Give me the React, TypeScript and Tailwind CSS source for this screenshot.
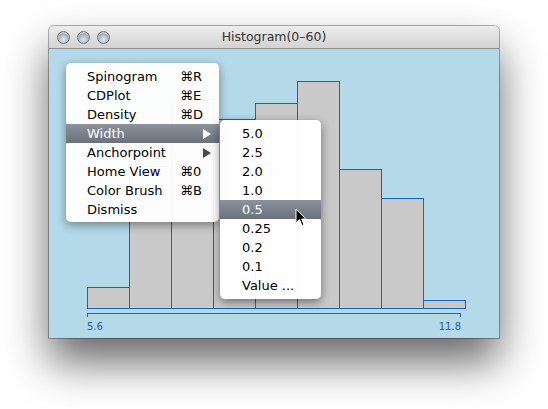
import React from 'react';

const bars = [
  { x: 38, top: 238 },
  { x: 80, top: 117 },
  { x: 122, top: 50 },
  { x: 164, top: 70 },
  { x: 206, top: 54 },
  { x: 248, top: 32 },
  { x: 290, top: 120 },
  { x: 332, top: 149 },
  { x: 374, top: 251 },
];

const mainItems = [
  { label: 'Spinogram', key: '⌘R' },
  { label: 'CDPlot', key: '⌘E' },
  { label: 'Density', key: '⌘D' },
  { label: 'Width', sub: true, active: true },
  { label: 'Anchorpoint', sub: true },
  { label: 'Home View', key: '⌘0' },
  { label: 'Color Brush', key: '⌘B' },
  { label: 'Dismiss' },
];

const widths = ['5.0', '2.5', '2.0', '1.0', '0.5', '0.25', '0.2', '0.1', 'Value ...'];

function Light() {
  return (
    <div className="w-[13px] h-[13px] rounded-full border border-[#6d7782] bg-[radial-gradient(circle_at_50%_70%,#e3e8ec_0%,#a9b2bb_55%,#7d8893_100%)] shadow-[inset_0_1px_1px_rgba(255,255,255,0.7)]" />
  );
}

function Arrow({ color }: { color: string }) {
  return (
    <svg width="8" height="10" viewBox="0 0 8 10">
      <path d="M0 0 L8 5 L0 10 Z" fill={color} />
    </svg>
  );
}

export default function App() {
  return (
    <div className="w-[548px] h-[409px] bg-white pt-[26px] pl-[49px] font-['DejaVu_Sans',sans-serif]">
      <div className="relative w-[450px] h-[312px] flex flex-col rounded-t-[5px] shadow-[0_24px_44px_rgba(0,0,0,0.6),0_0_0_1px_rgba(0,0,0,0.3)]">
        {/* title bar */}
        <div className="relative h-[23px] flex items-center rounded-t-[5px] bg-gradient-to-b from-[#ededed] to-[#d3d3d3] border-b border-[#8e8e8e]">
          <div className="flex gap-[7px] pl-[8px] pt-[1px]">
            <Light />
            <Light />
            <Light />
          </div>
          <div className="absolute inset-x-0 text-center text-[12.5px] text-[#333] pt-[1px]">Histogram(0–60)</div>
        </div>

        {/* plot area */}
        <div className="flex-1 bg-[#b4d9e8]">
          <svg width="450" height="289" viewBox="0 0 450 289" shapeRendering="crispEdges">
            {bars.map((b) => (
              <rect
                key={b.x}
                x={b.x + 0.5}
                y={b.top + 0.5}
                width={42}
                height={259 - b.top}
                fill="#c9c9c9"
                stroke="#1268bb"
                strokeWidth="1"
              />
            ))}
            <path d="M38.5 268 L38.5 264.5 L411.5 264.5 L411.5 268" fill="none" stroke="#1268bb" strokeWidth="1" />
            <text x="38" y="281" fontSize="10" fill="#2560a8" fontFamily="DejaVu Sans" shapeRendering="auto">5.6</text>
            <text x="412" y="281" fontSize="10" fill="#2560a8" fontFamily="DejaVu Sans" textAnchor="end" shapeRendering="auto">11.8</text>
          </svg>
        </div>

        {/* context menu */}
        <div className="absolute left-[17px] top-[37px] w-[153px] pt-[4px] pb-[3px] rounded-[5px] bg-white/[0.96] shadow-[0_3px_10px_rgba(0,0,0,0.4)] text-[13px] text-black">
          {mainItems.map((it) => (
            <div
              key={it.label}
              className={
                'relative h-[19px] flex items-center pl-[21px] ' +
                (it.active ? 'bg-gradient-to-b from-[#8c939c] to-[#6a717b] text-white' : '')
              }
            >
              <span>{it.label}</span>
              {it.key && <span className="absolute left-[114px]">{it.key}</span>}
              {it.sub && (
                <span className="absolute left-[137px] top-[5px]">
                  <Arrow color={it.active ? '#ffffff' : '#4a4a4a'} />
                </span>
              )}
            </div>
          ))}
        </div>

        {/* submenu */}
        <div className="absolute left-[171px] top-[94px] w-[101px] py-[4px] rounded-[5px] bg-white/[0.97] shadow-[0_3px_10px_rgba(0,0,0,0.45)] text-[13px] text-black">
          {widths.map((w) => (
            <div
              key={w}
              className={
                'h-[19px] flex items-center pl-[22px] ' +
                (w === '0.5' ? 'bg-gradient-to-b from-[#8c939c] to-[#6a717b] text-white' : '')
              }
            >
              {w}
            </div>
          ))}
        </div>

        {/* pointer */}
        <svg className="absolute left-[246px] top-[182px]" width="13" height="20" viewBox="0 0 13 20">
          <path d="M1 1 L1 15 L4.5 11.5 L7 17.5 L9 16.6 L6.6 11 L11 11 Z" fill="#000" stroke="#fff" strokeWidth="1" strokeLinejoin="round" />
        </svg>
      </div>
    </div>
  );
}
